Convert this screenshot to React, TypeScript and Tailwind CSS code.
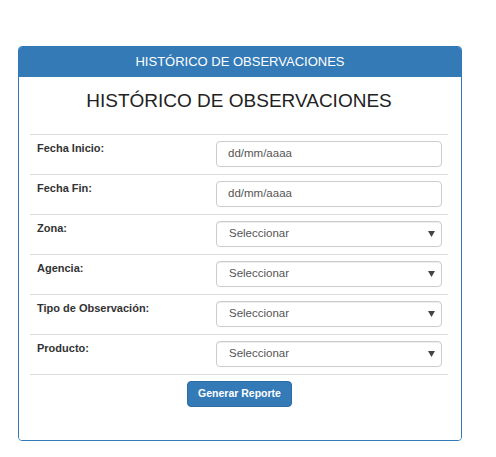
import React from "react";

const font = { fontFamily: '"Liberation Sans", Arial, sans-serif' };

const fields: { label: string; kind: "date" | "select" }[] = [
  { label: "Fecha Inicio:", kind: "date" },
  { label: "Fecha Fin:", kind: "date" },
  { label: "Zona:", kind: "select" },
  { label: "Agencia:", kind: "select" },
  { label: "Tipo de Observación:", kind: "select" },
  { label: "Producto:", kind: "select" },
];

function Field({ kind }: { kind: "date" | "select" }) {
  if (kind === "date") {
    return (
      <div className="h-[26px] mr-[6px] border border-[#cccccc] rounded-[4px] bg-white flex items-center pl-[11px] text-[11.5px] text-[#555555]">
        dd/mm/aaaa
      </div>
    );
  }
  return (
    <div className="h-[26px] mr-[6px] border border-[#cccccc] rounded-[4px] bg-white flex items-center justify-between pl-[12px] pr-[6px] text-[11.5px] text-[#555555] shadow-[inset_0_1px_1px_rgba(0,0,0,0.075)]">
      <span>Seleccionar</span>
      <svg width="7" height="6" viewBox="0 0 7 6">
        <path d="M0 0H7L3.5 6Z" fill="#444444" />
      </svg>
    </div>
  );
}

export default function App() {
  return (
    <div className="min-h-screen bg-white pt-[46px] pl-[18px]" style={font}>
      <div className="w-[444px] border border-[#337ab7] rounded-[4px] overflow-hidden">
        <div className="h-[30px] bg-[#337ab7] text-white text-[13px] flex items-center justify-center">
          HISTÓRICO DE OBSERVACIONES
        </div>
        <div className="pl-[11px] pr-[13px] pt-[12px] pb-[33px] bg-white">
          <h2 className="h-[24px] leading-[24px] text-[19px] text-[#222222] text-center mb-[21px]">
            HISTÓRICO DE OBSERVACIONES
          </h2>
          <div className="border-b border-[#dddddd]">
            {fields.map((f) => (
              <div
                key={f.label}
                className="grid grid-cols-[186px_1fr] border-t border-[#dddddd] h-[40px]"
              >
                <div className="pl-[7px] pt-[7px] text-[11px] leading-[13px] font-bold text-[#333333]">
                  {f.label}
                </div>
                <div className="pt-[6px]">
                  <Field kind={f.kind} />
                </div>
              </div>
            ))}
          </div>
          <div className="flex justify-center pt-[6px] pl-[1px]">
            <button className="h-[26px] w-[105px] bg-[#337ab7] border border-[#2e6da4] rounded-[4px] text-white text-[10.5px] font-bold">
              Generar Reporte
            </button>
          </div>
        </div>
      </div>
    </div>
  );
}
